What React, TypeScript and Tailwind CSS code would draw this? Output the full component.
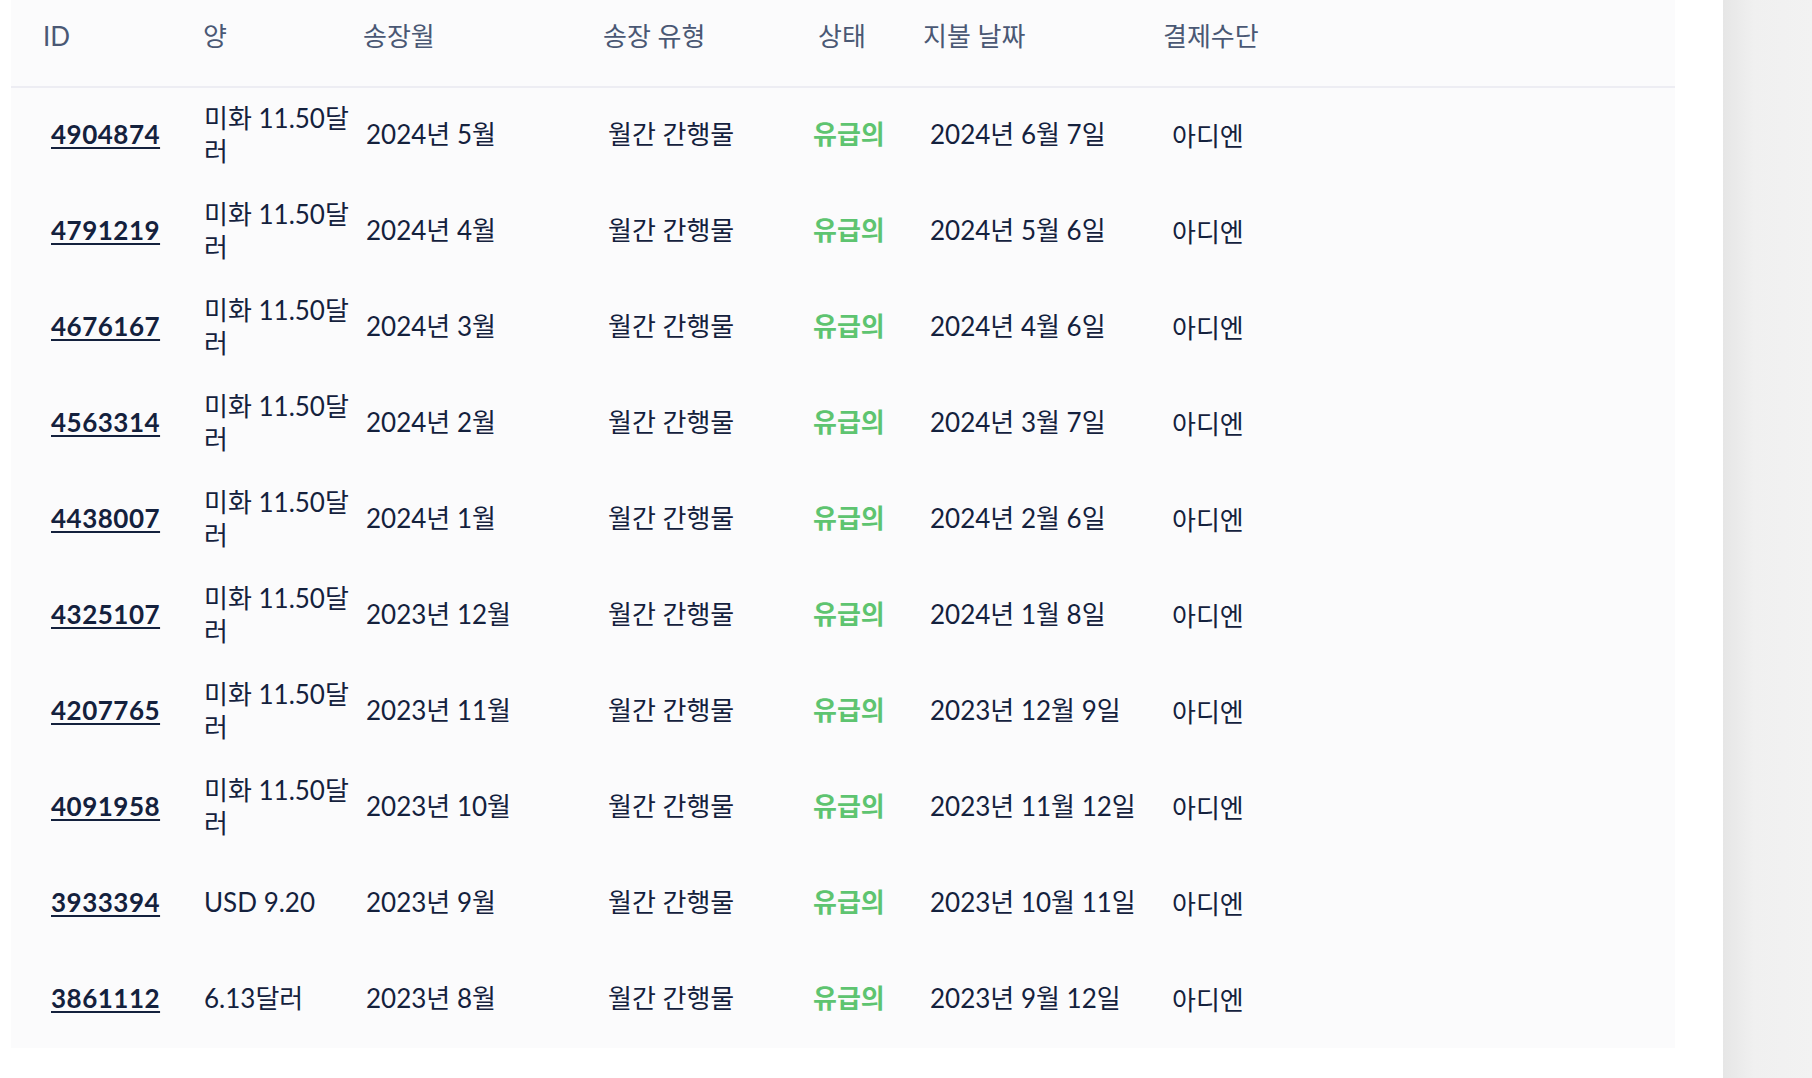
import React from "react";

type Invoice = {
  id: string;
  amount: string;
  month: string;
  paid: string;
};

const invoices: Invoice[] = [
  { id: "4904874", amount: "미화 11.50달러", month: "2024년 5월", paid: "2024년 6월 7일" },
  { id: "4791219", amount: "미화 11.50달러", month: "2024년 4월", paid: "2024년 5월 6일" },
  { id: "4676167", amount: "미화 11.50달러", month: "2024년 3월", paid: "2024년 4월 6일" },
  { id: "4563314", amount: "미화 11.50달러", month: "2024년 2월", paid: "2024년 3월 7일" },
  { id: "4438007", amount: "미화 11.50달러", month: "2024년 1월", paid: "2024년 2월 6일" },
  { id: "4325107", amount: "미화 11.50달러", month: "2023년 12월", paid: "2024년 1월 8일" },
  { id: "4207765", amount: "미화 11.50달러", month: "2023년 11월", paid: "2023년 12월 9일" },
  { id: "4091958", amount: "미화 11.50달러", month: "2023년 10월", paid: "2023년 11월 12일" },
  { id: "3933394", amount: "USD 9.20", month: "2023년 9월", paid: "2023년 10월 11일" },
  { id: "3861112", amount: "6.13달러", month: "2023년 8월", paid: "2023년 9월 12일" },
];

const headers = ["ID", "양", "송장월", "송장 유형", "상태", "지불 날짜", "결제수단"];

const font = { fontFamily: '"Lato", "Noto Sans CJK KR", sans-serif' };

export default function App() {
  return (
    <div className="flex w-full h-[1078px] bg-white text-[26px] leading-[33px]" style={font}>
      <div className="flex-1 pl-[11px] pr-[48px]">
        <div className="bg-[#fbfbfc] w-full">
          {/* header */}
          <div className="grid grid-cols-[160px_160px_240px_215px_105px_240px_1fr] pl-[32px] h-[88px] pt-[20px] text-[#4a5874] border-b-2 border-[#ededf3]">
            {headers.map((h) => (
              <div key={h}>{h}</div>
            ))}
          </div>

          {/* rows */}
          {invoices.map((inv) => (
            <div
              key={inv.id}
              className="grid grid-cols-[160px_160px_240px_215px_105px_240px_1fr] pl-[32px] h-[96px] pb-[3px] items-center text-[#14213d]"
            >
              <div className="ml-[8px]">
                <a href="#" className="font-bold tracking-[0.5px] underline decoration-2 underline-offset-[3px]">
                  {inv.id}
                </a>
              </div>
              <div className="ml-[1px] w-[156px]">{inv.amount}</div>
              <div className="ml-[3px]">{inv.month}</div>
              <div className="ml-[5px]">월간 간행물</div>
              <div className="-ml-[5px] font-semibold text-[#5ec470]">유급의</div>
              <div className="ml-[7px]">{inv.paid}</div>
              <div className="ml-[9px] pt-[4px]">아디엔</div>
            </div>
          ))}
        </div>
      </div>
      <div className="w-[89px] h-full bg-gradient-to-r from-[#e6e6e6] via-[#f0f0f0] via-[35%] to-[#f2f2f2]" />
    </div>
  );
}
